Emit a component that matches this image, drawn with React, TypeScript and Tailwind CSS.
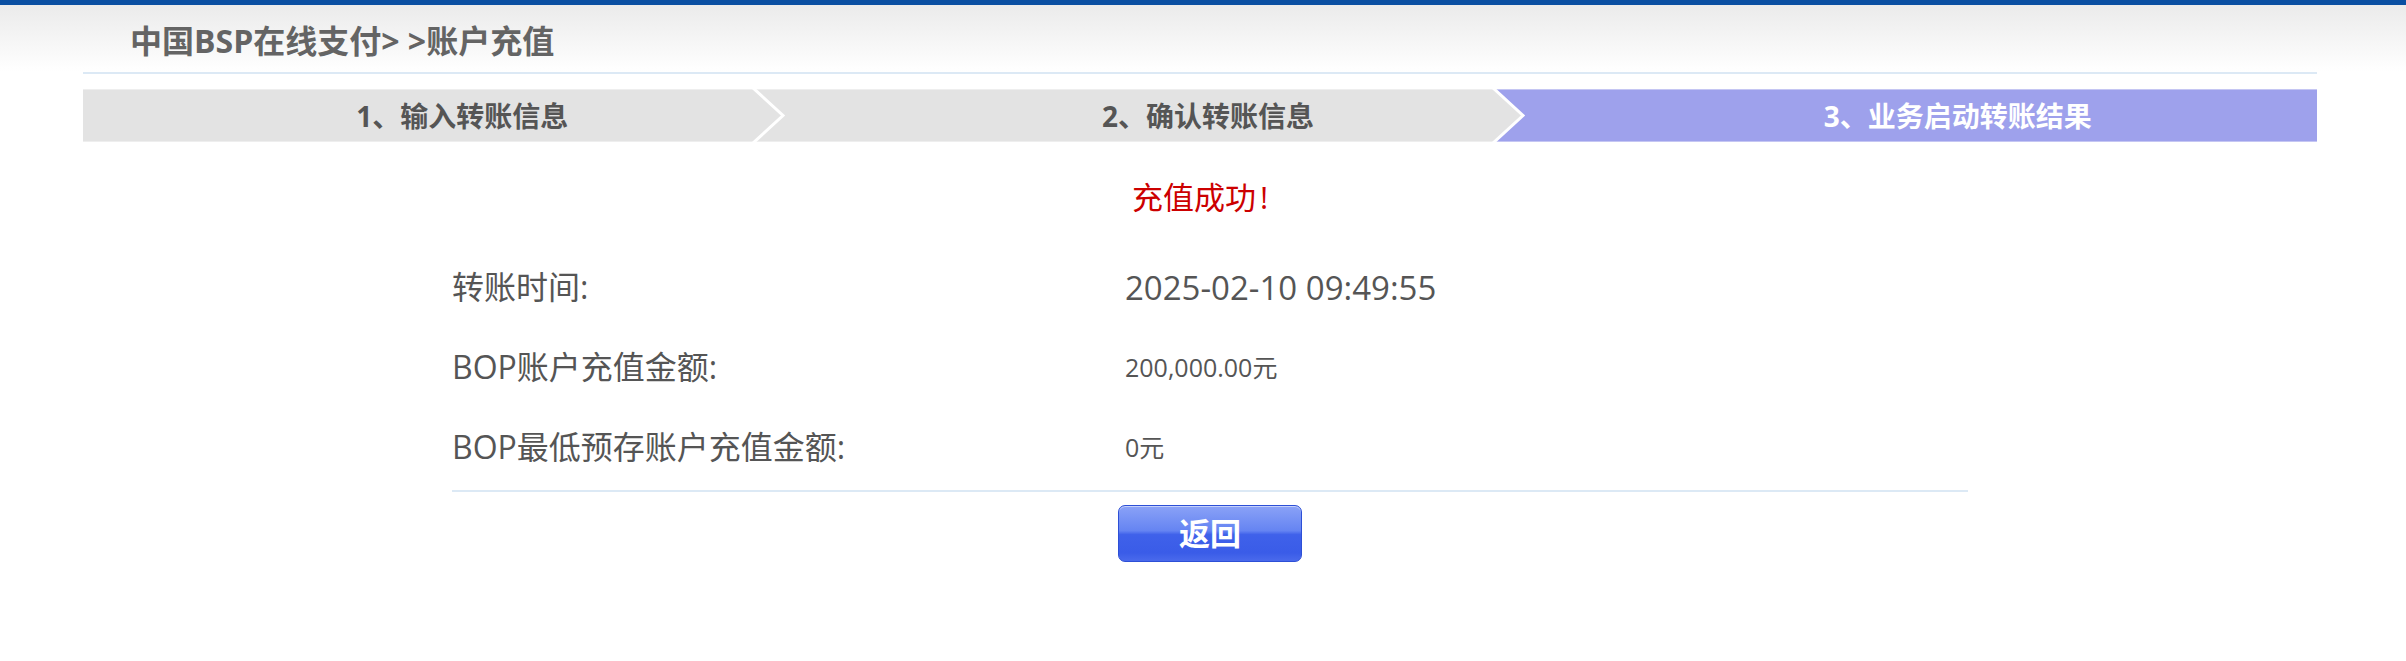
import React from "react";

const FONT = "font-['Open_Sans','Noto_Sans_CJK_SC',sans-serif]";

function StepBar() {
  return (
    <div className="relative mt-[15px] h-[53px] w-full bg-[#e3e3e3]">
      <div className="absolute top-0 bottom-0 left-[1411px] right-0 bg-[#9ea1ec] [clip-path:polygon(0_0,100%_0,100%_100%,0_100%,30px_50%)]" />
      <svg
        className="absolute inset-0"
        width="2234"
        height="53"
        viewBox="0 0 2234 53"
      >
        <polyline points="669,-2 700,26.5 669,55" fill="none" stroke="#ffffff" strokeWidth="3" />
        <polyline points="1409,-2 1440,26.5 1409,55" fill="none" stroke="#ffffff" strokeWidth="3" />
      </svg>
      <div className="pointer-events-none absolute inset-0 border-y border-white/40" />
      <div className="relative grid h-full grid-cols-3 items-center text-[28px] font-bold leading-none">
        <div className="pl-[14px] text-center text-[#555555]">1、输入转账信息</div>
        <div className="pl-[16px] text-center text-[#555555]">2、确认转账信息</div>
        <div className="pl-[26px] text-center text-white">3、业务启动转账结果</div>
      </div>
    </div>
  );
}

function Row({ label, value, valueClass }: { label: string; value: string; valueClass: string }) {
  return (
    <div className="flex h-[80px] items-center">
      <div className="w-[673px] text-[32px] text-[#555555] leading-none">{label}</div>
      <div className={`${valueClass} text-[#555555] leading-none`}>{value}</div>
    </div>
  );
}

export default function App() {
  return (
    <div className={`${FONT} min-h-[661px] w-full bg-white`}>
      <div className="h-[5px] w-full bg-[#0a4fa2]" />
      <div className="h-[67px] w-full bg-gradient-to-b from-[#ebebeb] to-white">
        <div className="ml-[83px] flex h-full w-[2234px] items-center pt-[4px]">
          <h1 className="ml-[47px] text-[32px] font-bold leading-none text-[#646464]">
            中国BSP在线支付&gt; &gt;账户充值
          </h1>
        </div>
      </div>
      <div className="ml-[83px] w-[2234px]">
        <div className="h-[2px] w-full bg-[#dce9f5]" />
        <StepBar />
        <div className="mt-[25px] flex h-[60px] items-center justify-center text-[31px] leading-none text-[#cc0000]">
          充值成功<span className="ml-[4px]">!</span>
        </div>
        <div className="ml-[369px] mt-[20px] w-[1516px]">
          <Row label="转账时间:" value="2025-02-10 09:49:55" valueClass="text-[33px]" />
          <Row label="BOP账户充值金额:" value="200,000.00元" valueClass="text-[25px]" />
          <Row label="BOP最低预存账户充值金额:" value="0元" valueClass="text-[25px]" />
          <div className="mt-[3px] h-[2px] w-full bg-[#dce9f5]" />
          <div className="mt-[13px] flex justify-center">
            <button className="flex h-[57px] w-[184px] items-center justify-center rounded-[7px] border border-[#2d4fd6] bg-[linear-gradient(to_bottom,#8aa2f7_0%,#6584f2_45%,#3f61ea_52%,#3a5ce8_85%,#4a6aec_100%)] text-[31px] font-bold leading-none text-white shadow-[inset_0_1px_0_rgba(255,255,255,0.5)]">
              返回
            </button>
          </div>
        </div>
      </div>
    </div>
  );
}
